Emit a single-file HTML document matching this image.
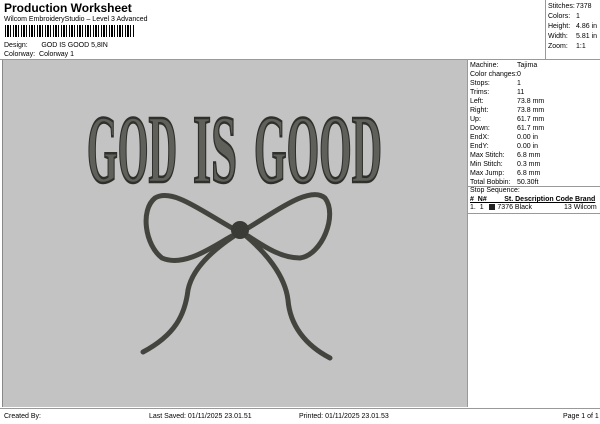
<!DOCTYPE html><html><head><style>
body{margin:0;width:600px;height:424px;position:relative;background:#fff;font-family:"Liberation Sans",sans-serif;overflow:hidden;color:#000}
.a{position:absolute;white-space:nowrap;font-size:7px}
</style></head><body>
<div class="a" style="left:4px;top:1px;font-size:12px;font-weight:bold">Production Worksheet</div>
<div class="a" style="left:4px;top:16px">Wilcom EmbroideryStudio – Level 3 Advanced</div>
<div class="a" style="left:5px;top:25px;width:130px;height:12px;background:repeating-linear-gradient(90deg,#000 0 1px,#fff 1px 2px,#000 2px 4px,#fff 4px 5px,#000 5px 6px,#fff 6px 8px)"></div>
<div class="a" style="left:4px;top:42px">Design:&nbsp;&nbsp;&nbsp;&nbsp;&nbsp;&nbsp;&nbsp;GOD IS GOOD 5,8IN</div>
<div class="a" style="left:4px;top:51px">Colorway:&nbsp; Colorway 1</div>
<div class="a" style="left:0;top:59px;width:600px;border-top:1px solid #999"></div>
<div class="a" style="left:545px;top:0;height:59px;border-left:1px solid #999"></div>
<div class="a" style="left:548px;top:2px;line-height:10px">Stitches:<br>Colors:<br>Height:<br>Width:<br>Zoom:</div>
<div class="a" style="left:576px;top:2px;line-height:10px">7378<br>1<br>4.86 in<br>5.81 in<br>1:1</div>
<div class="a" style="left:2px;top:60px;width:465px;height:347px;background:#c3c3c3;border-left:1px solid #888"></div>
<div class="a" style="left:467px;top:60px;height:347px;border-left:1px solid #999"></div>
<div class="a" style="left:470px;top:61px;line-height:9px">Machine:<br>Color changes:<br>Stops:<br>Trims:<br>Left:<br>Right:<br>Up:<br>Down:<br>EndX:<br>EndY:<br>Max Stitch:<br>Min Stitch:<br>Max Jump:<br>Total Bobbin:</div>
<div class="a" style="left:517px;top:61px;line-height:9px">Tajima<br>0<br>1<br>11<br>73.8 mm<br>73.8 mm<br>61.7 mm<br>61.7 mm<br>0.00 in<br>0.00 in<br>6.8 mm<br>0.3 mm<br>6.8 mm<br>50.30ft</div>
<div class="a" style="left:468px;top:186px;width:132px;border-top:1px solid #999"></div>
<div class="a" style="left:470px;top:187px">Stop Sequence:</div>
<div class="a" style="left:470px;top:196px;font-weight:bold;text-decoration:underline">#&nbsp; N#&nbsp;&nbsp;&nbsp;&nbsp;&nbsp;&nbsp;&nbsp;&nbsp; St.&nbsp;Description&nbsp;Code&nbsp;Brand</div>
<div class="a" style="left:470px;top:204px">1.&nbsp; 1&nbsp;&nbsp;&nbsp;<span style="display:inline-block;width:6px;height:6px;background:#222;vertical-align:-1px"></span> 7376 Black</div>
<div class="a" style="left:564px;top:204px">13 Wilcom</div>
<div class="a" style="left:468px;top:213px;width:132px;border-top:1px solid #999"></div>
<div class="a" style="left:0;top:408px;width:600px;border-top:1px solid #999"></div>
<div class="a" style="left:4px;top:413px">Created By:</div>
<div class="a" style="left:149px;top:413px">Last Saved: 01/11/2025 23.01.51</div>
<div class="a" style="left:299px;top:413px">Printed: 01/11/2025 23.01.53</div>
<div class="a" style="left:563px;top:413px">Page 1 of 1</div>
<svg class="a" style="left:0;top:0" width="600" height="424">
<g font-family="Liberation Serif,serif" font-weight="bold" font-size="98" fill="#60605b" stroke="#2f2f2c" stroke-width="2.5">
<text x="87" y="182" textLength="90" lengthAdjust="spacingAndGlyphs">GOD</text>
<text x="193" y="182" textLength="44" lengthAdjust="spacingAndGlyphs">IS</text>
<text x="254" y="182" textLength="128" lengthAdjust="spacingAndGlyphs">GOOD</text>
</g>
<g fill="none" stroke="#44443f" stroke-linecap="round">
<path d="M232,228 C200,210 172,188 155,198 C140,210 145,245 162,258 C185,268 215,245 232,236" stroke-width="5"/>
<path d="M248,228 C275,212 310,185 325,198 C338,215 322,255 300,258 C280,258 262,245 248,236" stroke-width="5"/>
<path d="M234,236 C210,252 192,270 188,290 C185,315 175,335 143,352" stroke-width="5"/>
<path d="M246,236 C265,252 285,275 288,300 C290,325 305,345 330,358" stroke-width="5"/>
</g>
<circle cx="240" cy="230" r="9" fill="#3a3a36"/>
</svg>
</body></html>
